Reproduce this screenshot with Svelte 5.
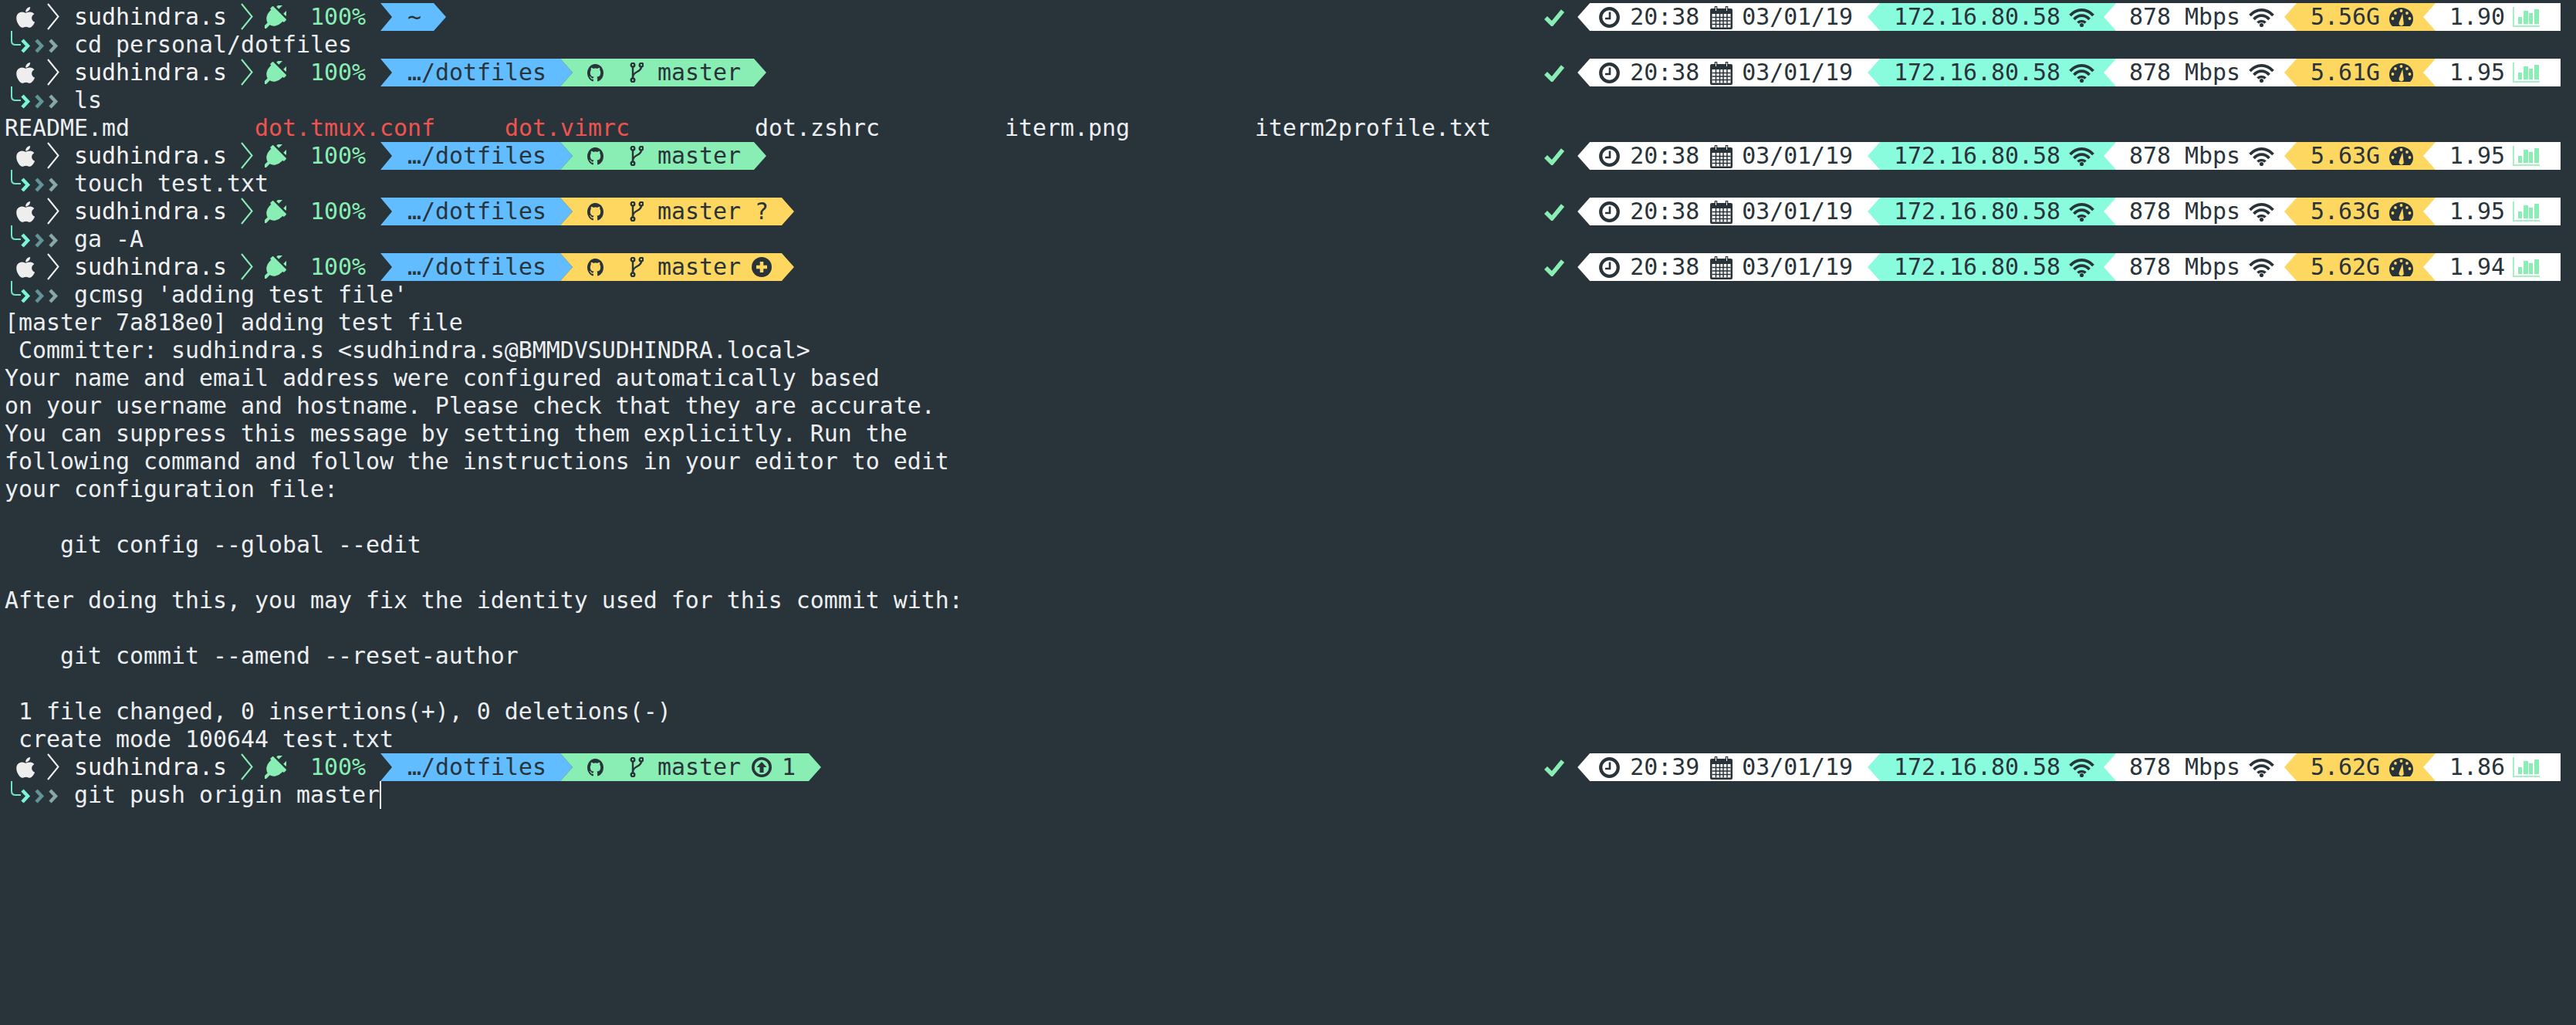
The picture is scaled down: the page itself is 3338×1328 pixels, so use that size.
<script>
  const prompts = {
    home: { path: '~', git: null, time: '20:38', mem: '5.56G', load: '1.90' },
    clean: { path: '…/dotfiles', git: { color: 'green' }, time: '20:38', mem: '5.61G', load: '1.95' },
    clean2: { path: '…/dotfiles', git: { color: 'green' }, time: '20:38', mem: '5.63G', load: '1.95' },
    untracked: { path: '…/dotfiles', git: { color: 'yellow', mark: 'q' }, time: '20:38', mem: '5.63G', load: '1.95' },
    staged: { path: '…/dotfiles', git: { color: 'yellow', mark: 'plus' }, time: '20:38', mem: '5.62G', load: '1.94' },
    ahead: { path: '…/dotfiles', git: { color: 'green', mark: 'up' }, time: '20:39', mem: '5.62G', load: '1.86' }
  }

  const outputTop = [
    '[master 7a818e0] adding test file',
    ' Committer: sudhindra.s <sudhindra.s@BMMDVSUDHINDRA.local>',
    'Your name and email address were configured automatically based',
    'on your username and hostname. Please check that they are accurate.',
    'You can suppress this message by setting them explicitly. Run the',
    'following command and follow the instructions in your editor to edit',
    'your configuration file:',
    '',
    '    git config --global --edit',
    '',
    'After doing this, you may fix the identity used for this commit with:',
    '',
    '    git commit --amend --reset-author',
    '',
    ' 1 file changed, 0 insertions(+), 0 deletions(-)',
    ' create mode 100644 test.txt'
  ]

  const listing = [
    ['README.md', false],
    ['dot.tmux.conf', true],
    ['dot.vimrc', true],
    ['dot.zshrc', false],
    ['iterm.png', false],
    ['iterm2profile.txt', false]
  ]
</script>

{#snippet wifi()}
  <svg class="wifi" viewBox="0 0 33 25" width="33" height="25">
    <g fill="none" stroke="currentColor" stroke-width="3.6">
      <path d="M1.5 10C10 0.500 23 0.500 31.500 10" />
      <path d="M6.500 15C12 8.500 21 8.500 26.500 15" />
      <path d="M11.500 19.500C14 16.800 19 16.800 21.500 19.500" />
    </g>
    <circle cx="16.500" cy="22.500" r="2.600" fill="currentColor" />
  </svg>
{/snippet}

{#snippet prompt(p)}
  <div class="row prompt">
    <div class="left">
      <svg class="apple" viewBox="0 30 380 455" width="24" height="27" preserveAspectRatio="none">
        <path fill="#eeeeee" d="M318.7 268.7c-.2-36.7 16.4-64.4 50-84.8-18.8-26.9-47.2-41.7-84.7-44.6-35.5-2.8-74.3 20.7-88.5 20.7-15 0-49.4-19.7-76.4-19.7C63.3 141.2 4 184.8 4 273.5q0 39.3 14.4 81.2c12.8 36.7 59 126.7 107.2 125.2 25.2-.6 43-17.9 75.8-17.9 31.8 0 48.3 17.9 76.4 17.9 48.6-.7 90.4-82.5 102.6-119.3-65.2-30.7-61.7-90-61.7-91.9zm-56.6-164.2c27.3-32.4 24.8-61.9 24-72.5-24.1 1.4-52 16.4-67.9 34.9-17.5 19.8-27.8 44.3-25.6 71.9 26.1 2 49.9-11.4 69.5-34.3z" />
      </svg>
      <svg class="chev" viewBox="0 0 16 36" width="16" height="36">
        <path d="M1 1L14.5 17.5L1 34" fill="none" stroke="#f2f2f2" stroke-width="2" />
      </svg>
      <span class="name">sudhindra.s</span>
      <svg class="chev2" viewBox="0 0 16 36" width="16" height="36">
        <path d="M1 1L14.5 17.5L1 34" fill="none" stroke="#89eeb4" stroke-width="2" />
      </svg>
      <svg class="plug" viewBox="0 0 28 30" width="28" height="30">
        <g transform="translate(14 15) rotate(45) scale(0.066 0.08) translate(-192 -256)">
          <path fill="#89eeb4" d="M320 32a32 32 0 0 0-64 0v96h64zm48 128H16a16 16 0 0 0-16 16v32a16 16 0 0 0 16 16h16v32a160.07 160.07 0 0 0 128 156.8V512h64v-99.2A160.07 160.07 0 0 0 352 256v-32h16a16 16 0 0 0 16-16v-32a16 16 0 0 0-16-16zM128 32a32 32 0 0 0-64 0v96h64z" />
        </g>
      </svg>
      <span class="pct">100%</span>
      <div class="seg path" class:short={!p.git}>{p.path}</div>
      {#if p.git}
        <div class="seg git {p.git.color}">
          <svg class="octo" viewBox="0 0 16 16" width="21" height="23" preserveAspectRatio="none">
            <path fill="#29333a" d="M8 0C3.58 0 0 3.58 0 8c0 3.54 2.29 6.53 5.47 7.59.4.07.55-.17.55-.38 0-.19-.01-.82-.01-1.49-2.01.37-2.53-.49-2.69-.94-.09-.23-.48-.94-.82-1.13-.28-.15-.68-.52-.01-.53.63-.01 1.08.58 1.23.82.72 1.21 1.87.87 2.33.66.07-.52.28-.87.51-1.07-1.78-.2-3.64-.89-3.64-3.95 0-.87.31-1.59.82-2.15-.08-.2-.36-1.02.08-2.12 0 0 .67-.21 2.2.82.64-.18 1.32-.27 2-.27.68 0 1.36.09 2 .27 1.53-1.04 2.2-.82 2.2-.82.44 1.1.16 1.92.08 2.12.51.56.82 1.27.82 2.15 0 3.07-1.87 3.75-3.65 3.95.29.25.54.73.54 1.48 0 1.07-.01 1.93-.01 2.2 0 .21.15.46.55.38A8.013 8.013 0 0 0 16 8c0-4.42-3.58-8-8-8z" />
          </svg>
          <svg class="branch" viewBox="0 0 18 26" width="18" height="26">
            <g fill="none" stroke="#29333a" stroke-width="2.4">
              <circle cx="4" cy="3.200" r="2.300" />
              <circle cx="15" cy="3.200" r="2.300" />
              <circle cx="4" cy="22.800" r="2.300" />
              <path d="M4 5.500V20.500" />
              <path d="M15 5.500C15 13 4 11 4 19" />
            </g>
          </svg>
          <span class="branch-name">master</span>
          {#if p.git.mark === 'q'}
            <span class="mark-q">?</span>
          {:else if p.git.mark === 'plus'}
            <svg class="mark-icon" viewBox="0 0 26 26" width="26" height="26">
              <circle cx="13" cy="13" r="13" fill="#29333a" />
              <path d="M13 6V20M6 13H20" stroke="#fdd75f" stroke-width="4.500" />
            </svg>
          {:else if p.git.mark === 'up'}
            <svg class="mark-icon up" viewBox="0 0 26 26" width="26" height="26">
              <circle cx="13" cy="13" r="11.200" fill="none" stroke="#29333a" stroke-width="3.600" />
              <path d="M13 6L19.500 13H15.500V20H10.500V13H6.500z" fill="#29333a" />
            </svg>
            <span class="ahead">1</span>
          {/if}
        </div>
      {/if}
    </div>

    <div class="right">
      <svg class="check" viewBox="0 0 26 24" width="26" height="24">
        <path d="M2 13L10 21L24 4" fill="none" stroke="#89eeb4" stroke-width="5.500" />
      </svg>
      <div class="rseg white first">
        <svg class="clock" viewBox="0 0 27 27" width="27" height="27">
          <circle cx="13.500" cy="13.500" r="11.300" fill="none" stroke="#29333a" stroke-width="4.200" />
          <path d="M14 6.500V15H8" fill="none" stroke="#29333a" stroke-width="2.600" />
        </svg>
        <span class="time">{p.time}</span>
        <svg class="cal" viewBox="0 0 29 31" width="29" height="31">
          <path fill="#29333a" d="M2 4h25a2 2 0 0 1 2 2v23a2 2 0 0 1-2 2H2a2 2 0 0 1-2-2V6a2 2 0 0 1 2-2z" />
          <path d="M7.500 1V8M21.500 1V8" stroke="#29333a" stroke-width="3.500" />
          <path d="M7.500 2V7M21.500 2V7" stroke="#ffffff" stroke-width="1" />
          <path d="M2.500 11H26.500V28.500H2.500z" fill="#ffffff" />
          <path d="M2.500 15.500H26.500M2.500 20H26.500M2.500 24.500H26.500M7.500 11V28.500M12.500 11V28.500M17 11V28.500M22 11V28.500" stroke="#29333a" stroke-width="1.500" />
        </svg>
        <span class="date">03/01/19</span>
      </div>
      <div class="rseg mint ip">
        <span>172.16.80.58</span>
        {@render wifi()}
      </div>
      <div class="rseg white speed">
        <span>878 Mbps</span>
        {@render wifi()}
      </div>
      <div class="rseg yellow mem">
        <span>{p.mem}</span>
        <svg class="gauge" viewBox="0 0 31 24" width="31" height="24" preserveAspectRatio="none">
          <path fill="#29333a" d="M15.500 0C7 0 0 6.500 0 14.500c0 3.600 1.500 7 4 9.500h23c2.500-2.500 4-5.900 4-9.500C31 6.500 24 0 15.500 0z" />
          <g fill="#fdd75f">
            <circle cx="15.500" cy="4" r="1.900" />
            <circle cx="8" cy="7" r="1.900" />
            <circle cx="4.500" cy="14" r="1.900" />
            <circle cx="26.500" cy="14" r="1.900" />
            <circle cx="23" cy="7" r="1.900" />
            <path d="M17.300 7.500L18.600 19a3.200 3.200 0 1 1-5.900 0z" />
          </g>
        </svg>
      </div>
      <div class="rseg white load">
        <span>{p.load}</span>
        <svg class="bars" viewBox="0 0 35 27" width="35" height="27">
          <path d="M1 0V25H35" fill="none" stroke="#a6f0c6" stroke-width="2" />
          <path fill="#89eeb4" d="M7 13h5v9H7zM14 5h6v17h-6zM21 8h5v14h-5zM28 3h6v19h-6z" />
        </svg>
      </div>
    </div>
  </div>
{/snippet}

{#snippet command(text, cursor = false)}
  <div class="row cmd">
    <svg class="arrows" viewBox="1 0 90 36" width="90" height="36">
      <path d="M10 0V13Q10 18 15 18H22" fill="none" stroke="#6fe3c8" stroke-width="2" />
      <path d="M24 12L31 19.500L24 27" fill="none" stroke="#7bf5d8" stroke-width="4.500" />
      <path d="M42 12L49 19.500L42 27" fill="none" stroke="#5f9597" stroke-width="4.500" />
      <path d="M60 12L67 19.500L60 27" fill="none" stroke="#87a7a8" stroke-width="4.500" />
    </svg>
    <span>{text}</span>{#if cursor}<i class="cursor"></i>{/if}
  </div>
{/snippet}

<div class="term">
  {@render prompt(prompts.home)}
  {@render command('cd personal/dotfiles')}
  {@render prompt(prompts.clean)}
  {@render command('ls')}
  <div class="row listing">
    {#each listing as [name, red]}
      <span class:red>{name}</span>
    {/each}
  </div>
  {@render prompt(prompts.clean2)}
  {@render command('touch test.txt')}
  {@render prompt(prompts.untracked)}
  {@render command('ga -A')}
  {@render prompt(prompts.staged)}
  {@render command("gcmsg 'adding test file'")}
  {#each outputTop as line}
    <div class="row">{line}</div>
  {/each}
  {@render prompt(prompts.ahead)}
  {@render command('git push origin master', true)}
</div>

<style>
  :global(body) {
    background: #29333a;
  }
  .term {
    min-height: 1324px;
    padding: 4px 20px 0 6px;
    font-family: "DejaVu Sans Mono", monospace;
    font-size: 29.9px;
    line-height: 36px;
    color: #eceff1;
    overflow: hidden;
  }
  .row {
    height: 36px;
    white-space: pre;
  }
  .listing {
    display: grid;
    grid-template-columns: repeat(6, 324px);
  }
  .red {
    color: #ef5350;
  }

  .prompt {
    display: flex;
    justify-content: space-between;
    align-items: center;
  }
  .left, .right, .seg, .rseg, .cmd {
    display: flex;
    align-items: center;
  }
  .apple { margin-left: 15px; }
  .chev { margin-left: 16px; }
  .name { margin-left: 19px; width: 198px; color: #f5f5f5; }
  .chev2 { margin-left: 18px; }
  .plug { margin-left: 15px; }
  .pct { margin-left: 31px; width: 72px; color: #89eeb4; }

  .seg {
    height: 36px;
    color: #29333a;
  }
  .path {
    margin-left: 19px;
    padding: 0 34px 0 35px;
    background: #61bdff;
    clip-path: polygon(0 0, calc(100% - 16px) 0, 100% 50%, calc(100% - 16px) 100%, 0 100%, 15px 50%);
  }
  .path.short {
    padding-right: 32px;
  }
  .git {
    margin-left: -16px;
    padding: 0 33px 0 35px;
    clip-path: polygon(0 0, calc(100% - 16px) 0, 100% 50%, calc(100% - 16px) 100%, 0 100%, 16px 50%);
  }
  .green { background: #89eeb4; }
  .yellow { background: #fdd75f; }
  .mint { background: #89fcde; }
  .white { background: #ffffff; }
  .branch { margin-left: 34px; }
  .branch-name { margin-left: 18px; }
  .mark-q { margin-left: 18px; }
  .mark-icon { margin-left: 14px; margin-right: -4px; }
  .mark-icon.up { margin-right: 0; }
  .ahead { margin-left: 13px; }

  .check { margin-right: 17px; }
  .rseg {
    height: 36px;
    color: #29333a;
    margin-left: -16px;
    padding-left: 34px;
    clip-path: polygon(16px 0, 100% 0, 100% 100%, 16px 100%, 0 50%);
  }
  .first {
    margin-left: 0;
    padding-left: 28px;
    padding-right: 35px;
  }
  .time { margin-left: 13px; }
  .cal { margin-left: 14px; }
  .date { margin-left: 12px; }
  .ip { padding-right: 28px; }
  .speed { padding-left: 33px; padding-right: 29px; }
  .mem { padding-right: 29px; }
  .wifi { margin-left: 11px; }
  .gauge { margin-left: 12px; }
  .bars { margin-left: 10px; margin-right: 27px; }

  .cursor {
    width: 2px;
    height: 36px;
    background: #eceff1;
  }
</style>
